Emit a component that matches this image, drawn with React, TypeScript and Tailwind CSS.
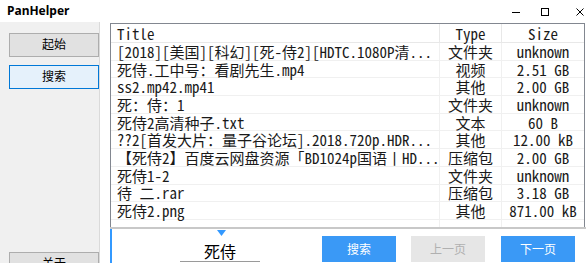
import React from "react";

const rows = [
  { title: "[2018][美国][科幻][死-侍2][HDTC.1080P清...", type: "文件夹", size: "unknown" },
  { title: "死侍.工中号：看剧先生.mp4", type: "视频", size: "2.51 GB" },
  { title: "ss2.mp42.mp41", type: "其他", size: "2.00 GB" },
  { title: "死：侍：1", type: "文件夹", size: "unknown" },
  { title: "死侍2高清种子.txt", type: "文本", size: "60 B" },
  { title: "??2[首发大片：量子谷论坛].2018.720p.HDR...", type: "其他", size: "12.00 kB" },
  { title: "【死侍2】百度云网盘资源「BD1024p国语丨HD...", type: "压缩包", size: "2.00 GB" },
  { title: "死侍1-2", type: "文件夹", size: "unknown" },
  { title: "待 二.rar", type: "压缩包", size: "3.18 GB" },
  { title: "死侍2.png", type: "其他", size: "871.00 kB" },
];

const mono = "font-['Noto_Sans_Mono_CJK_SC','Liberation_Mono','Noto_Sans_CJK_SC',monospace]";

function SideButton({ label, active }: { label: string; active?: boolean }) {
  return (
    <button
      className={`h-[24px] w-full border text-[12px] text-black ${
        active ? "bg-[#e5f1fb] border-[#0078d7]" : "bg-[#e1e1e1] border-[#adadad]"
      }`}
    >
      {label}
    </button>
  );
}

export default function App() {
  return (
    <div className="w-[586px] h-[263px] overflow-hidden bg-white flex flex-col font-['Noto_Sans','Noto_Sans_CJK_SC',sans-serif]">
      {/* title bar */}
      <div className="h-[22px] flex items-center justify-between shrink-0">
        <span className="pl-[7px] text-[12px] font-bold text-black">PanHelper</span>
        <div className="flex items-center h-full pt-[2px]">
          <svg className="mr-[19px]" width="10" height="10" viewBox="0 0 10 10">
            <line x1="1" y1="5.5" x2="9" y2="5.5" stroke="#000" strokeWidth="1" />
          </svg>
          <svg className="mr-[25px]" width="10" height="10" viewBox="0 0 10 10">
            <rect x="1.5" y="1.5" width="7" height="7" fill="none" stroke="#000" strokeWidth="1" />
          </svg>
          <svg className="mr-[1px]" width="10" height="10" viewBox="0 0 10 10">
            <path d="M1.5 1.5 L8.5 8.5 M8.5 1.5 L1.5 8.5" stroke="#000" strokeWidth="1" />
          </svg>
        </div>
      </div>

      <div className="flex flex-1 min-h-0">
        {/* sidebar */}
        <div className="w-[100px] shrink-0 bg-[#f0f0f0] border-r border-[#dadada] flex flex-col pl-[9px] pt-[11px]">
          <SideButton label="起始" />
          <div className="h-[8px]" />
          <SideButton label="搜索" active />
          <div className="mt-auto -mb-[13px]">
            <SideButton label="关于" />
          </div>
        </div>
        <div className="w-[10px] shrink-0" />

        {/* main */}
        <div className="flex-1 flex flex-col min-w-0">
          <div className={`mt-[1px] mr-[1px] h-[204px] border border-[#828790] border-b-0 flex flex-col text-[15px] leading-[15px] text-[#1a1a1a] ${mono}`}>
            <div className="flex h-[19px] shrink-0 border-b border-[#e8e8e8] items-center">
              <div className="w-[329px] pl-[6px] border-r border-[#e8e8e8] h-full flex items-center">Title</div>
              <div className="w-[62px] border-r border-[#e8e8e8] h-full flex items-center justify-center">Type</div>
              <div className="flex-1 h-full flex items-center justify-center">Size</div>
            </div>
            {rows.map((r, i) => (
              <div key={i} className="flex h-[17.7px] shrink-0 border-b border-[#f0f0f0] items-center">
                <div className="w-[329px] pl-[6px] border-r border-[#f0f0f0] h-full flex items-center whitespace-nowrap">
                  {r.title}
                </div>
                <div className="w-[62px] border-r border-[#f0f0f0] h-full flex items-center justify-center whitespace-nowrap">
                  {r.type}
                </div>
                <div className="flex-1 h-full flex items-center justify-center whitespace-nowrap">{r.size}</div>
              </div>
            ))}
            <div className="flex-1 flex">
              <div className="w-[329px] border-r border-[#f0f0f0]" />
              <div className="w-[62px] border-r border-[#f0f0f0]" />
            </div>
          </div>
          <div className="h-[2px] bg-[#c8c8c8] shrink-0" />

          {/* bottom panel */}
          <div className="flex-1 border-l-2 border-[#3399ff] relative flex items-start">
            <svg className="absolute left-[105px] top-[1px]" width="9" height="6" viewBox="0 0 9 6">
              <path d="M0 0 H9 L4.5 6 Z" fill="#3399ff" />
            </svg>
            <div className="ml-[68px] mt-[13px] w-[80px] border-b border-[#9a9a9a] text-center text-[16px] leading-[19px] text-black font-['Noto_Sans_CJK_SC',sans-serif]">
              死侍
            </div>
            <div className="ml-[62px] mt-[7px] flex gap-[15px] text-[12px] font-['Noto_Sans_CJK_SC',sans-serif]">
              <button className="w-[74px] h-[26px] bg-[#3a99f6] text-white">搜索</button>
              <button className="w-[74px] h-[26px] bg-[#e6e6e6] text-[#b0b0b0]">上一页</button>
              <button className="w-[74px] h-[26px] bg-[#3a99f6] text-white ml-[1px]">下一页</button>
            </div>
          </div>
        </div>
      </div>
    </div>
  );
}
